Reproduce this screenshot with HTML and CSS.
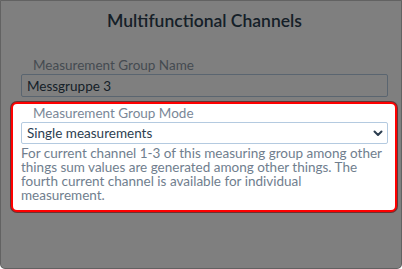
FILE: index.html
```html
<!DOCTYPE html>
<html lang="en">
<head>
    <meta charset="UTF-8">
    <meta name="viewport" content="width=device-width, initial-scale=1.0">
    <title>Multifunctional Channels</title>
    <link rel="stylesheet" href="styles.css">
</head>
<body>
    <div class="dialog">
        <h2 class="dialog-title">Multifunctional Channels</h2>

        <div class="form-group">
            <label for="groupName">Measurement Group Name</label>
            <input type="text" id="groupName" value="Messgruppe 3">
        </div>

        <div class="form-group highlight">
            <label for="groupMode">Measurement Group Mode</label>
            <div class="select-wrap">
                <select id="groupMode">
                    <option>Single measurements</option>
                    <option>Sum measurements</option>
                </select>
                <svg class="chevron" width="10" height="7" viewBox="0 0 10 7">
                    <path d="M1.5 1.5 L5 5 L8.5 1.5" fill="none" stroke="#2c3e50" stroke-width="2" stroke-linecap="round" stroke-linejoin="round"/>
                </svg>
            </div>
            <p class="help">For current channel 1-3 of this measuring group among other things sum values are generated among other things. The fourth current channel is available for individual measurement.</p>
        </div>

        <div class="overlay"></div>
    </div>
</body>
</html>
```

FILE: styles.css
```css
* {
    box-sizing: border-box;
}
body {
    margin: 0;
    font-family: Lato, "Open Sans", sans-serif;
    background-color: #fff;
}
.dialog {
    position: relative;
    height: 269px;
    padding: 9px 13px 0 20px;
    background-color: #fff;
    border: 1px solid #c4c4c4;
    border-radius: 0 0 5px 5px;
}
.dialog-title {
    margin: 0 0 25px 0;
    font-size: 17.5px;
    line-height: 22px;
    font-weight: 600;
    color: #2c3e50;
    text-align: center;
}
.form-group label {
    display: block;
    padding-left: 12px;
    margin-bottom: 1px;
    font-size: 13.5px;
    line-height: 16px;
    color: #8a96a3;
}
.form-group input,
.form-group select {
    display: block;
    width: 100%;
    height: 23px;
    padding: 0 5px;
    font-family: inherit;
    font-size: 13.5px;
    color: #2c3e50;
    background-color: #fff;
    border: 1px solid #b4cae0;
    border-radius: 2px;
    outline: none;
}
.highlight {
    position: relative;
    z-index: 2;
    margin: 5px -9px 0 -10px;
    padding: 1px 7px 8px 8px;
    background-color: #fff;
    border: 2px solid #f00;
    border-radius: 6px;
    box-shadow: 0 0 0 1px rgba(90, 0, 0, 0.6);
}
.highlight label {
    color: #7a8797;
}
.select-wrap {
    position: relative;
}
.select-wrap select {
    height: 22px;
    appearance: none;
    -webkit-appearance: none;
}
.chevron {
    position: absolute;
    right: 5px;
    top: 8px;
}
.help {
    margin: 2px 0 0 0;
    font-size: 13.5px;
    line-height: 14px;
    color: #707e8e;
}
.overlay {
    position: absolute;
    inset: -1px;
    z-index: 1;
    background-color: rgba(0, 0, 0, 0.5);
    border-radius: 0 0 5px 5px;
}
```
